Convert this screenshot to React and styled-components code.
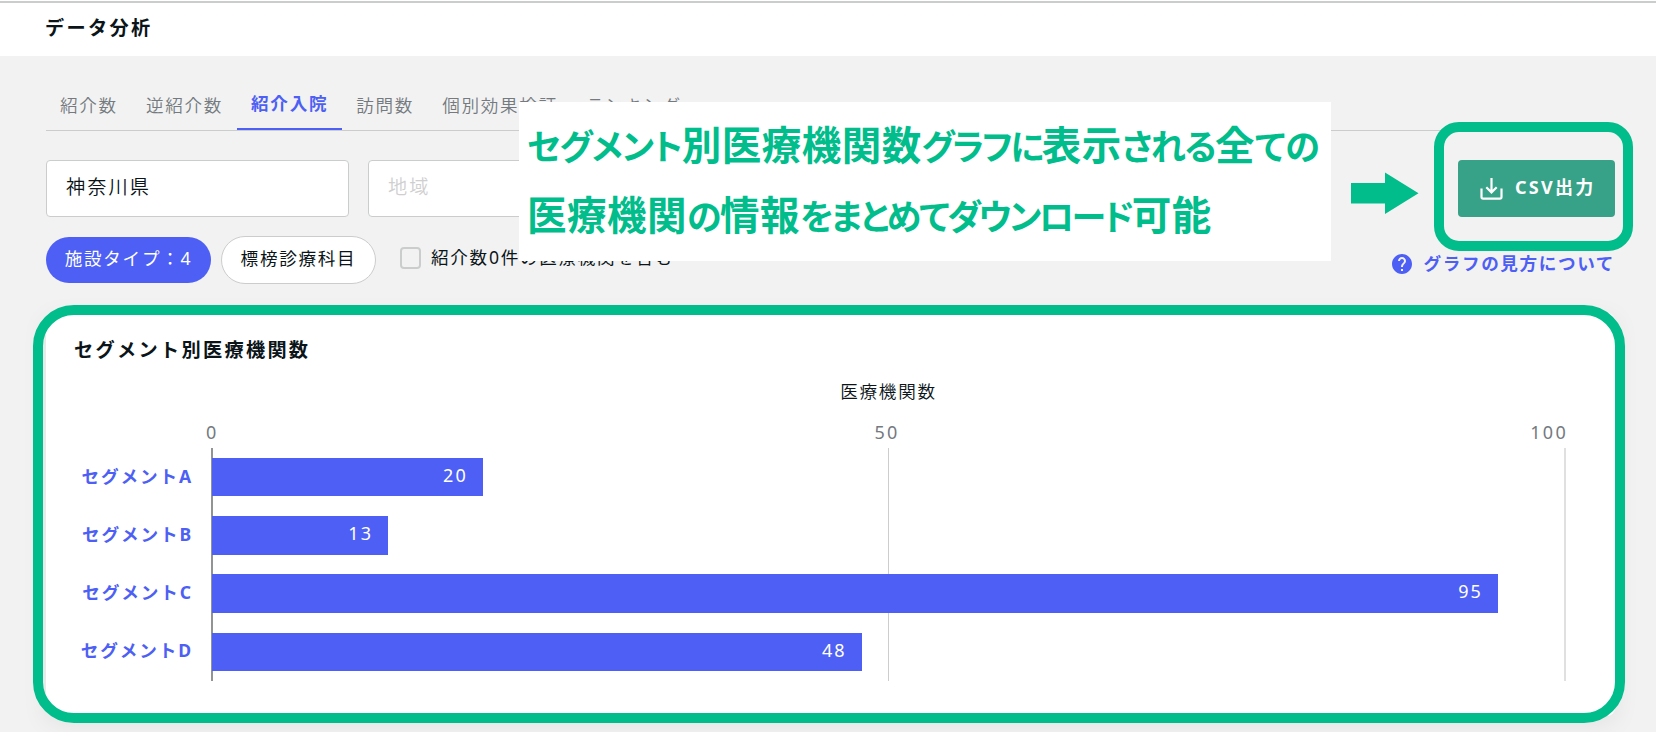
import React from 'react'
import styled, { createGlobalStyle, ThemeProvider } from 'styled-components'

const theme = {
  colors: {
    main: '#4d5ff4',
    accent: '#00bd8b',
    button: '#37a287',
    text: '#0b1519',
    muted: '#747a7f',
    placeholder: '#cfcfcf',
    border: '#cbcdcc',
    background: '#f2f2f2',
  },
}

const GlobalStyle = createGlobalStyle`
  * {
    box-sizing: border-box;
  }
  body {
    margin: 0;
    overflow: hidden;
    background-color: #f2f2f2;
    font-family: 'Noto Sans', 'Noto Sans CJK JP', sans-serif;
    font-size: 17.6px;
    font-weight: 350;
    letter-spacing: 1.7px;
    color: #0b1519;
  }
`

const Page = styled.div`
  position: relative;
  width: 1656px;
  height: 732px;
  overflow: hidden;
  background-color: ${(props) => props.theme.colors.background};
`
const Top = styled.div`
  display: flow-root;
  height: 56px;
  background-color: #fff;
`
const Header = styled.header`
  height: 55px;
  margin-top: 1px;
  padding-left: 45px;
  border-top: 2px solid ${(props) => props.theme.colors.border};
`
const PageTitle = styled.h1`
  margin: 0;
  font-size: 19.2px;
  font-weight: 700;
  line-height: 49px;
  letter-spacing: 2.3px;
`
const Main = styled.main`
  padding: 25px 41px 0 46px;
`
const Tabs = styled.nav`
  display: flex;
  height: 50px;
  border-bottom: 1px solid ${(props) => props.theme.colors.border};
`
const Tab = styled.a`
  height: 49px;
  padding: 0 14px;
  line-height: ${(props) => (props.active ? 45 : 48)}px;
  white-space: nowrap;
  font-weight: ${(props) => (props.active ? 700 : 350)};
  color: ${(props) =>
    props.active ? props.theme.colors.main : props.theme.colors.muted};
  border-bottom: 2px solid
    ${(props) => (props.active ? props.theme.colors.main : 'transparent')};
`
const Filters = styled.div`
  display: flex;
  gap: 19px;
  margin-top: 29px;
`
const Field = styled.div`
  width: 303px;
  height: 57px;
  padding-left: 19px;
  font-size: 19.2px;
  line-height: 52px;
  letter-spacing: 2.1px;
  color: ${(props) =>
    props.empty ? props.theme.colors.placeholder : props.theme.colors.text};
  background-color: #fff;
  border: 1px solid ${(props) => props.theme.colors.border};
  border-radius: 4px;
`
const CsvButton = styled.button`
  display: flex;
  align-items: center;
  width: 157px;
  height: 57px;
  margin-left: auto;
  padding: 0 0 0 21px;
  font: inherit;
  font-size: 18px;
  font-weight: 700;
  letter-spacing: 2.3px;
  color: #fff;
  background-color: ${(props) => props.theme.colors.button};
  border: none;
  border-radius: 4px;

  svg {
    margin-right: 11px;
  }
  span {
    padding-bottom: 6px;
  }
`
const Options = styled.div`
  display: flex;
  align-items: center;
  height: 48px;
  margin-top: 19px;
`
const Chip = styled.div`
  width: ${(props) => props.width}px;
  height: ${(props) => (props.active ? 46 : 48)}px;
  margin-right: 10px;
  line-height: ${(props) => (props.active ? 42 : 42)}px;
  text-align: center;
  font-weight: 400;
  color: ${(props) => (props.active ? '#fff' : props.theme.colors.text)};
  background-color: ${(props) =>
    props.active ? props.theme.colors.main : '#fff'};
  border: ${(props) =>
    props.active ? 'none' : `1px solid ${props.theme.colors.border}`};
  border-radius: 24px;
`
const CheckLabel = styled.label`
  display: flex;
  align-items: center;
  margin-left: 14px;
  font-weight: 400;
  white-space: nowrap;

  span {
    padding-bottom: 8px;
  }
`
const Box = styled.i`
  width: 21px;
  height: 22px;
  margin: -4px 10px 0 0;
  border: 2px solid ${(props) => props.theme.colors.border};
  border-radius: 4px;
`
const HelpLink = styled.a`
  display: flex;
  align-items: center;
  gap: 12px;
  margin-left: auto;
  padding-top: 8px;
  font-weight: 700;
  letter-spacing: 1.6px;
  color: ${(props) => props.theme.colors.main};

  span {
    padding-bottom: 3px;
  }
`
const Card = styled.section`
  height: 403px;
  margin-top: 29px;
  padding-left: 28px;
  background-color: #fff;
  border-radius: 8px;
  box-shadow: 0 6px 26px rgba(0, 0, 0, 0.08);
`
const CardTitle = styled.h2`
  margin: 0;
  padding-top: 22px;
  font-size: 19.2px;
  font-weight: 700;
  line-height: 30px;
  letter-spacing: 2.3px;
`
const Chart = styled.div`
  display: grid;
  grid-template-columns: 137px 1355px;
  grid-template-rows: 54px 29px 233px;
`
const AxisTitle = styled.div`
  grid-column: 2;
  line-height: 53px;
  text-align: center;
`
const Ticks = styled.div`
  grid-column: 2;
  display: grid;
  grid-template-columns: repeat(3, 1fr);
  margin: 0 -2px 0 -5px;
  font-size: 18px;
  font-weight: 400;
  line-height: 26px;
  letter-spacing: 2.3px;
  color: ${(props) => props.theme.colors.muted};

  span:nth-child(2) {
    text-align: center;
  }
  span:nth-child(3) {
    text-align: right;
  }
`
const Labels = styled.div`
  display: grid;
  grid-auto-rows: 1fr;
  align-items: center;
  padding-right: 18px;
  margin: -2px 0 2px;
  text-align: right;
  font-weight: 700;
  letter-spacing: 1.9px;
  color: ${(props) => props.theme.colors.main};
`
const Plot = styled.div`
  display: grid;
  grid-template-columns: 675px 1fr;
  border-left: 2px solid #929494;
  border-right: 2px solid #e0e0e0;
`
const GridLine = styled.div`
  grid-area: 1 / 2;
  width: 1px;
  background-color: #cdcdcd;
`
const Bars = styled.div`
  grid-area: 1 / 1 / 2 / 3;
  z-index: 1;
  display: grid;
  grid-auto-rows: 1fr;
  align-items: center;
  margin: 0 -1.5px 0 -1px;
`
const Bar = styled.div`
  height: 38.6px;
  padding-right: 15px;
  font-size: 18px;
  font-weight: 400;
  line-height: 34.5px;
  letter-spacing: 2px;
  text-align: right;
  color: #fff;
  background-color: ${(props) => props.theme.colors.main};
`

const Note = styled.div`
  position: absolute;
  top: 102px;
  left: 519px;
  width: 811.5px;
  height: 159px;
  padding: 9px 0 0 8px;
  font-size: 39.5px;
  font-weight: 700;
  line-height: 68px;
  letter-spacing: 0.5px;
  white-space: nowrap;
  color: ${(props) => props.theme.colors.accent};
  background-color: #fff;
`
const Kana = styled.span`
  font-size: 35px;
  font-feature-settings: 'palt';
  letter-spacing: ${(props) => props.spacing}px;
`
const Arrow = styled.svg`
  position: absolute;
  top: 172px;
  left: 1351px;
  fill: ${(props) => props.theme.colors.accent};
`
const Highlight = styled.div`
  position: absolute;
  top: ${(props) => props.y}px;
  left: ${(props) => props.x}px;
  width: ${(props) => props.w}px;
  height: ${(props) => props.h}px;
  border: 10px solid ${(props) => props.theme.colors.accent};
  border-radius: ${(props) => props.radius}px;
`

const tabs = [
  { name: '紹介数' },
  { name: '逆紹介数' },
  { name: '紹介入院', active: true },
  { name: '訪問数' },
  { name: '個別効果検証' },
  { name: 'ランキング' },
]
const segments = [
  { name: 'セグメントA', count: 20 },
  { name: 'セグメントB', count: 13 },
  { name: 'セグメントC', count: 95 },
  { name: 'セグメントD', count: 48 },
]

const DownloadIcon = () => (
  <svg width='25' height='24' viewBox='0 0 25 24' fill='none' stroke='#fff'>
    <path
      d='M2.5 11.5V20a1.7 1.7 0 0 0 1.7 1.7h16.6a1.7 1.7 0 0 0 1.7-1.7v-8.5'
      strokeWidth='2.2'
    />
    <path d='M12.5 1v14M7.3 10.2l5.2 5.2 5.2-5.2' strokeWidth='2.2' />
  </svg>
)
const HelpIcon = () => (
  <svg width='20' height='20' viewBox='2 2 20 20' fill='currentColor'>
    <path d='M12 2C6.48 2 2 6.48 2 12s4.48 10 10 10 10-4.48 10-10S17.52 2 12 2zm1 17h-2v-2h2v2zm2.07-7.75l-.9.92C13.45 12.9 13 13.5 13 15h-2v-.5c0-1.1.45-2.1 1.17-2.83l1.24-1.26c.37-.36.59-.86.59-1.41 0-1.1-.9-2-2-2s-2 .9-2 2H8c0-2.21 1.79-4 4-4s4 1.79 4 4c0 .88-.36 1.68-.93 2.25z' />
  </svg>
)

export default function App() {
  return (
    <ThemeProvider theme={theme}>
      <GlobalStyle />
      <Page>
        <Top>
          <Header>
            <PageTitle>データ分析</PageTitle>
          </Header>
        </Top>
        <Main>
          <Tabs>
            {tabs.map(({ name, active }) => (
              <Tab key={name} active={active}>
                {name}
              </Tab>
            ))}
          </Tabs>
          <Filters>
            <Field>神奈川県</Field>
            <Field empty>地域</Field>
            <CsvButton>
              <DownloadIcon />
              <span>CSV出力</span>
            </CsvButton>
          </Filters>
          <Options>
            <Chip active width={165}>
              施設タイプ：4
            </Chip>
            <Chip width={155}>標榜診療科目</Chip>
            <CheckLabel>
              <Box />
              <span>紹介数0件の医療機関を含む</span>
            </CheckLabel>
            <HelpLink>
              <HelpIcon />
              <span>グラフの見方について</span>
            </HelpLink>
          </Options>
          <Card>
            <CardTitle>セグメント別医療機関数</CardTitle>
            <Chart>
              <AxisTitle>医療機関数</AxisTitle>
              <Ticks>
                <span>0</span>
                <span>50</span>
                <span>100</span>
              </Ticks>
              <Labels>
                {segments.map(({ name }) => (
                  <span key={name}>{name}</span>
                ))}
              </Labels>
              <Plot>
                <GridLine />
                <Bars>
                  {segments.map(({ name, count }) => (
                    <Bar key={name} style={{ width: `${count}%` }}>
                      {count}
                    </Bar>
                  ))}
                </Bars>
              </Plot>
            </Chart>
          </Card>
        </Main>
        <Note>
          <Kana spacing={-0.9}>セグメント</Kana>別医療機関数
          <Kana spacing={-2.4}>グラフに</Kana>表示
          <Kana spacing={-1.6}>される</Kana>全<Kana spacing={-0.2}>ての</Kana>
          <br />
          医療機関<Kana spacing={-1.5}>の</Kana>情報
          <Kana spacing={-2.5}>をまとめてダウンロード</Kana>可能
        </Note>
        <Arrow width='68' height='43' viewBox='0 0 68 43'>
          <path d='M0 11h34V0.5L67.5 21.2 34 42V31.500H0z' />
        </Arrow>
        <Highlight x={1434} y={122} w={199} h={129} radius={25} />
        <Highlight x={33} y={305} w={1592} h={418} radius={41} />
      </Page>
    </ThemeProvider>
  )
}
